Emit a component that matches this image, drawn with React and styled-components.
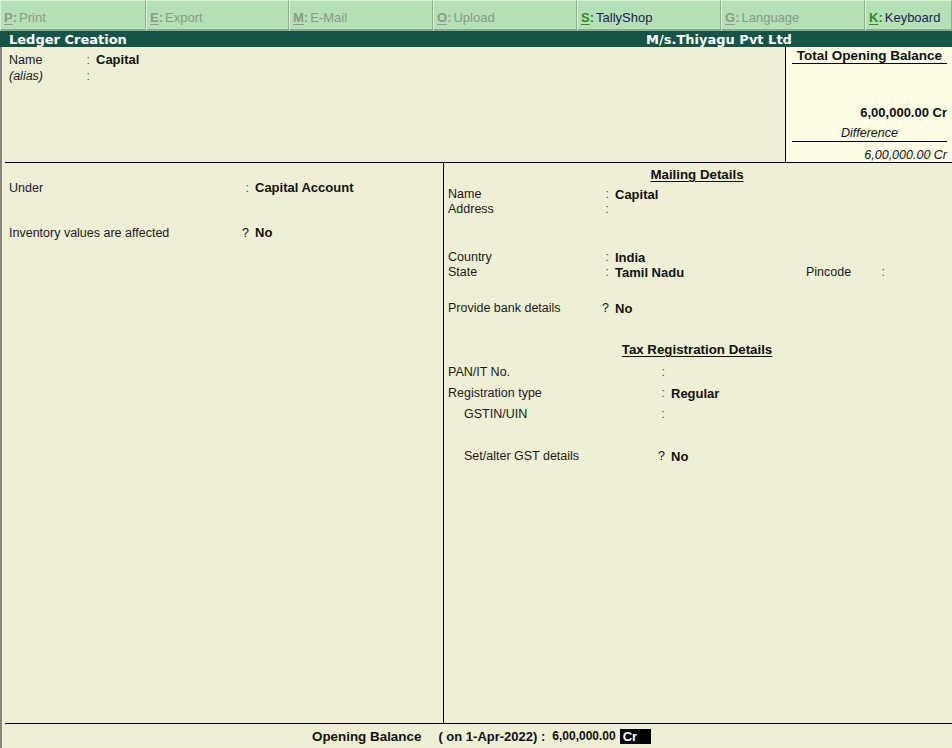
import React from "react";
import styled, { createGlobalStyle } from "styled-components";

const Global = createGlobalStyle`
  html, body { margin: 0; padding: 0; width: 952px; height: 748px; overflow: hidden; }
  body { font-family: "Liberation Sans", Arial, sans-serif; color: #111; background: #eeefd5; }
  * { box-sizing: border-box; }
`;

const Page = styled.div`
  width: 952px;
  height: 748px;
  display: flex;
  flex-direction: column;
  background: #eeefd5;
`;

const Toolbar = styled.div`
  height: 31px;
  display: grid;
  grid-template-columns: 146px 143px repeat(4, 144px) 1fr;
  background: #9fc49f;
`;

const ToolButton = styled.div`
  display: flex;
  align-items: center;
  padding: 4px 0 0 3px;
  background: #b5dfb5;
  border-top: 1px solid #d9f0d9;
  border-left: 1px solid #d9f0d9;
  border-right: 1px solid #8fb08f;
  border-bottom: 2px solid #8aa98a;
  font-size: 13px;
  color: ${(p) => (p.$active ? "#1b2456" : "#8a9b8a")};
  white-space: nowrap;
`;

const KeyHint = styled.span`
  font-weight: bold;
  margin-right: 2px;
  color: ${(p) => (p.$active ? "#2c8a2c" : "#8a9b8a")};
  u { text-decoration-thickness: 1px; text-underline-offset: 2px; }
`;

const TitleBar = styled.div`
  height: 16px;
  display: flex;
  align-items: center;
  background: #175447;
  color: #fff;
  font-family: "DejaVu Sans", Verdana, sans-serif;
  font-weight: bold;
  font-size: 13px;
`;

const TitleLeft = styled.div`
  flex: 1;
  padding-left: 9px;
`;

const TitleRight = styled.div`
  width: 466px;
  text-align: center;
`;

const Body = styled.div`
  flex: 1;
  display: flex;
  flex-direction: column;
  border-left: 2px solid #85857c;
`;

const TopSection = styled.div`
  height: 115px;
  display: flex;
`;

const NameBlock = styled.div`
  flex: 1;
  padding: 4px 0 0 7px;
`;

const BalanceBox = styled.div`
  width: 167px;
  background: #fdfde6;
  border-left: 1px solid #000;
  padding: 0 5px 0 6px;
  display: flex;
  flex-direction: column;
  font-size: 13px;
  line-height: 16px;
`;

const BoxHeader = styled.div`
  font-weight: bold;
  font-size: 13.5px;
  text-align: center;
  border-bottom: 1px solid #000;
  height: 17px;
  line-height: 17px;
`;

const BoxAmount = styled.div`
  margin-top: 41px;
  text-align: right;
  font-weight: bold;
`;

const BoxCaption = styled.div`
  margin-top: 4px;
  text-align: center;
  font-style: italic;
  font-size: 12.5px;
  border-bottom: 1px solid #000;
`;

const BoxDiff = styled.div`
  margin-top: 5px;
  text-align: right;
  font-style: italic;
  font-size: 12.5px;
`;

const HRule = styled.div`
  height: 1px;
  margin-left: 3px;
  background: #000;
`;

const Middle = styled.div`
  flex: 1;
  display: flex;
`;

const LeftPanel = styled.div`
  width: 442px;
  border-right: 1px solid #000;
  padding: 16px 0 0 7px;
`;

const RightPanel = styled.div`
  flex: 1;
  padding: 3px 6px 0 4px;
`;

const Row = styled.div`
  display: flex;
  align-items: center;
  height: ${(p) => p.$h || 16}px;
  padding-top: 1px;
  margin-top: ${(p) => p.$mt || 0}px;
  font-size: 12.5px;
`;

const Label = styled.div`
  width: ${(p) => p.$w}px;
  flex: none;
  padding-left: ${(p) => p.$indent || 0}px;
  font-style: ${(p) => (p.$italic ? "italic" : "normal")};
  color: #1a1a1a;
  white-space: nowrap;
`;

const Sep = styled.div`
  width: 10px;
  flex: none;
  text-align: right;
  color: ${(p) => (p.$q ? "#111" : "#555")};
`;

const Value = styled.div`
  margin-left: 6px;
  font-weight: bold;
  font-size: 13px;
  width: ${(p) => (p.$w ? `${p.$w}px` : "auto")};
  flex: none;
`;

const Heading = styled.div`
  height: 16px;
  line-height: 17px;
  margin-top: ${(p) => p.$mt || 0}px;
  text-align: center;
  font-weight: bold;
  font-size: 13.3px;
  text-decoration: underline;
  text-decoration-thickness: 1px;
  text-underline-offset: 2px;
`;

const Footer = styled.div`
  height: 24px;
  display: flex;
  align-items: center;
  padding-left: 310px;
  font-weight: bold;
  font-size: 13px;
`;

const FooterLabel = styled.span`
  margin-right: 17px;
  font-size: 13.4px;
`;

const FooterDate = styled.span`
  margin-right: 7px;
`;

const FooterAmount = styled.span`
  font-size: 12px;
`;

const CrBox = styled.span`
  margin-left: 4px;
  width: 31px;
  height: 15px;
  line-height: 15px;
  background: #000;
  color: #fff;
  padding-left: 3px;
`;

const tools = [
  { k: "P", t: "Print" },
  { k: "E", t: "Export" },
  { k: "M", t: "E-Mail" },
  { k: "O", t: "Upload" },
  { k: "S", t: "TallyShop", a: true },
  { k: "G", t: "Language" },
  { k: "K", t: "Keyboard", a: true },
];

export default function App() {
  return (
    <Page>
      <Global />
      <Toolbar>
        {tools.map((b) => (
          <ToolButton key={b.k} $active={b.a}>
            <KeyHint $active={b.a}>
              <u>{b.k}</u>:
            </KeyHint>
            {b.t}
          </ToolButton>
        ))}
      </Toolbar>
      <TitleBar>
        <TitleLeft>Ledger Creation</TitleLeft>
        <TitleRight>M/s.Thiyagu Pvt Ltd</TitleRight>
      </TitleBar>
      <Body>
        <TopSection>
          <NameBlock>
            <Row>
              <Label $w={71}>Name</Label>
              <Sep>:</Sep>
              <Value>Capital</Value>
            </Row>
            <Row>
              <Label $w={71} $italic>(alias)</Label>
              <Sep>:</Sep>
            </Row>
          </NameBlock>
          <BalanceBox>
            <BoxHeader>Total Opening Balance</BoxHeader>
            <BoxAmount>6,00,000.00 Cr</BoxAmount>
            <BoxCaption>Difference</BoxCaption>
            <BoxDiff>6,00,000.00 Cr</BoxDiff>
          </BalanceBox>
        </TopSection>
        <HRule />
        <Middle>
          <LeftPanel>
            <Row>
              <Label $w={230}>Under</Label>
              <Sep>:</Sep>
              <Value>Capital Account</Value>
            </Row>
            <Row $mt={29}>
              <Label $w={230}>Inventory values are affected</Label>
              <Sep $q>?</Sep>
              <Value>No</Value>
            </Row>
          </LeftPanel>
          <RightPanel>
            <Heading>Mailing Details</Heading>
            <Row $h={15} $mt={4}>
              <Label $w={151}>Name</Label>
              <Sep>:</Sep>
              <Value>Capital</Value>
            </Row>
            <Row $h={15}>
              <Label $w={151}>Address</Label>
              <Sep>:</Sep>
            </Row>
            <Row $h={15} $mt={33}>
              <Label $w={151}>Country</Label>
              <Sep>:</Sep>
              <Value>India</Value>
            </Row>
            <Row $h={15}>
              <Label $w={151}>State</Label>
              <Sep>:</Sep>
              <Value $w={191}>Tamil Nadu</Value>
              <Label $w={69}>Pincode</Label>
              <Sep>:</Sep>
            </Row>
            <Row $h={15} $mt={21}>
              <Label $w={151}>Provide bank details</Label>
              <Sep $q>?</Sep>
              <Value>No</Value>
            </Row>
            <Heading $mt={26}>Tax Registration Details</Heading>
            <Row $h={15} $mt={7}>
              <Label $w={207}>PAN/IT No.</Label>
              <Sep>:</Sep>
            </Row>
            <Row $h={15} $mt={6}>
              <Label $w={207}>Registration type</Label>
              <Sep>:</Sep>
              <Value>Regular</Value>
            </Row>
            <Row $h={15} $mt={6}>
              <Label $w={207} $indent={16}>GSTIN/UIN</Label>
              <Sep>:</Sep>
            </Row>
            <Row $h={15} $mt={27}>
              <Label $w={207} $indent={16}>Set/alter GST details</Label>
              <Sep $q>?</Sep>
              <Value>No</Value>
            </Row>
          </RightPanel>
        </Middle>
        <HRule />
        <Footer>
          <FooterLabel>Opening Balance</FooterLabel>
          <FooterDate>( on 1-Apr-2022) :</FooterDate>
          <FooterAmount>6,00,000.00</FooterAmount>
          <CrBox>Cr</CrBox>
        </Footer>
      </Body>
    </Page>
  );
}
